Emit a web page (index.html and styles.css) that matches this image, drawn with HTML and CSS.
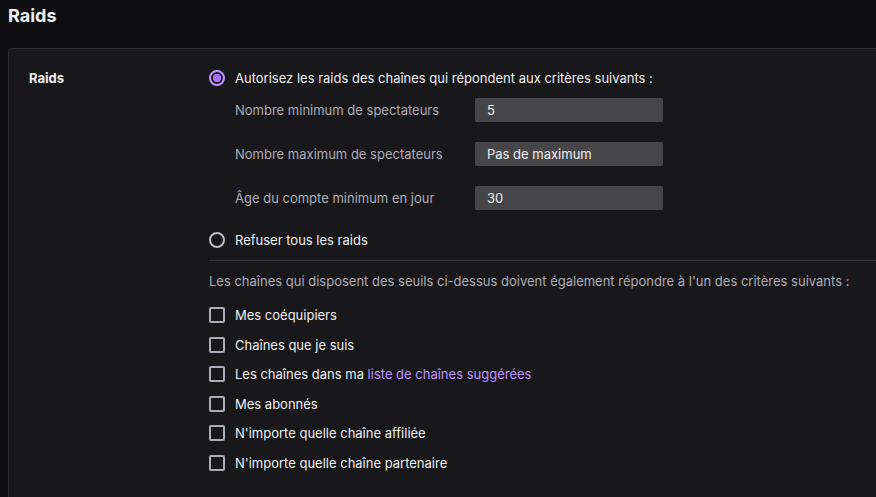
FILE: index.html
```html
<!DOCTYPE html>
<html lang="fr">
<head>
<meta charset="utf-8">
<title>Raids</title>
<link rel="stylesheet" href="styles.css">
</head>
<body>
<h1 class="page-title">Raids</h1>
<section class="card">
  <div class="setting">
    <div class="setting-label">Raids</div>
    <div class="setting-body">
      <label class="radio-row">
        <span class="radio radio-on"></span>
        <span class="opt-text">Autorisez les raids des chaînes qui répondent aux critères suivants :</span>
      </label>
      <div class="fields">
        <div class="field">
          <span class="field-label">Nombre minimum de spectateurs</span>
          <span class="input">5</span>
        </div>
        <div class="field">
          <span class="field-label">Nombre maximum de spectateurs</span>
          <span class="input">Pas de maximum</span>
        </div>
        <div class="field">
          <span class="field-label">Âge du compte minimum en jour</span>
          <span class="input">30</span>
        </div>
      </div>
      <label class="radio-row radio-row-2">
        <span class="radio"></span>
        <span class="opt-text">Refuser tous les raids</span>
      </label>
      <hr class="divider">
      <p class="hint">Les chaînes qui disposent des seuils ci-dessus doivent également répondre à l'un des critères suivants :</p>
      <div class="checks">
        <label class="check-row"><span class="box"></span><span class="opt-text">Mes coéquipiers</span></label>
        <label class="check-row"><span class="box"></span><span class="opt-text">Chaînes que je suis</span></label>
        <label class="check-row"><span class="box"></span><span class="opt-text">Les chaînes dans ma <a class="link">liste de chaînes suggérées</a></span></label>
        <label class="check-row"><span class="box"></span><span class="opt-text">Mes abonnés</span></label>
        <label class="check-row"><span class="box"></span><span class="opt-text">N'importe quelle chaîne affiliée</span></label>
        <label class="check-row"><span class="box"></span><span class="opt-text">N'importe quelle chaîne partenaire</span></label>
      </div>
    </div>
  </div>
</section>
</body>
</html>
```

FILE: styles.css
```css
html, body {
  margin: 0;
  padding: 0;
  background: #0e0e10;
  height: 100%;
  overflow: hidden;
}
body {
  font-family: Inter, "Noto Sans", "Liberation Sans", sans-serif;
  font-size: 13px;
  color: #efeff1;
  padding-left: 8px;
  box-sizing: border-box;
}
.page-title {
  margin: 0;
  padding-top: 4px;
  font-size: 18px;
  line-height: 24px;
  font-weight: 700;
  color: #efeff1;
}
.card {
  box-sizing: border-box;
  height: calc(100vh - 48px);
  margin-top: 20px;
  background: #18181b;
  border: 1px solid #2f2f33;
  border-right: none;
  border-bottom: none;
  border-radius: 5px 0 0 0;
  padding: 19px 0 0 20px;
}
.setting {
  display: grid;
  grid-template-columns: 180px 1fr;
}
.setting-label {
  font-weight: 700;
  line-height: 20px;
}
.setting-body {
  display: flex;
  flex-direction: column;
}
.radio-row, .check-row {
  display: flex;
  align-items: center;
  gap: 10px;
  height: 20px;
  line-height: 20px;
}
.radio {
  box-sizing: border-box;
  width: 16px;
  height: 16px;
  border-radius: 50%;
  border: 2px solid #bdbdc4;
  flex: none;
}
.radio-on {
  border-color: #bf94ff;
  background: radial-gradient(circle, #a970ff 0 4px, transparent 4.5px);
}
.opt-text {
  color: #efeff1;
}
.fields {
  display: flex;
  flex-direction: column;
  gap: 20px;
  margin-top: 10px;
  padding-left: 26px;
}
.field {
  display: flex;
  align-items: center;
  height: 24px;
}
.field-label {
  width: 240px;
  color: #adadb8;
}
.input {
  box-sizing: border-box;
  width: 188px;
  height: 24px;
  line-height: 24px;
  padding-left: 12px;
  background: #464649;
  border-radius: 2px;
  color: #efeff1;
}
.radio-row-2 {
  margin-top: 20px;
}
.divider {
  margin: 10px 0 0 0;
  border: none;
  border-top: 1px solid #35353a;
  height: 0;
}
.hint {
  margin: 10px 0 0 0;
  line-height: 20px;
  color: #adadb8;
}
.checks {
  display: flex;
  flex-direction: column;
  gap: 9.6px;
  margin-top: 14px;
}
.box {
  box-sizing: border-box;
  width: 16px;
  height: 16px;
  border: 2px solid #adadb8;
  border-radius: 2px;
  flex: none;
}
.link {
  color: #bf94ff;
  text-decoration: none;
}
```
